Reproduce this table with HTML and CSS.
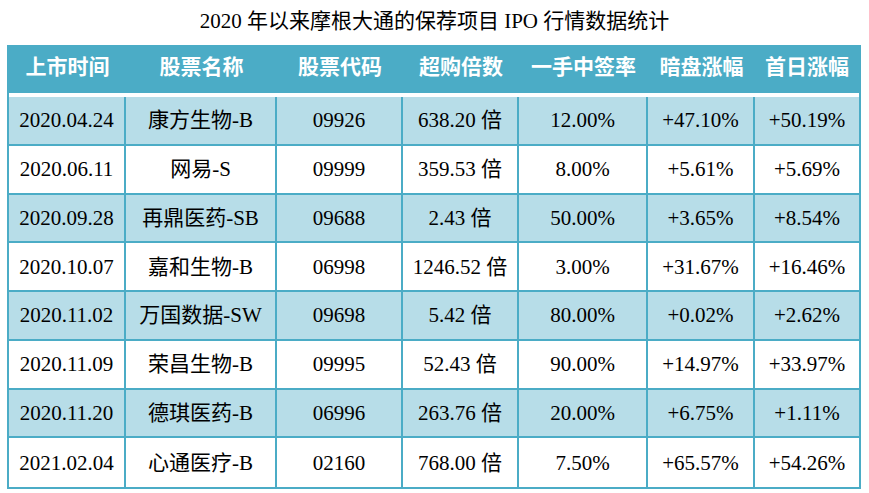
FILE: index.html
```html
<!DOCTYPE html>
<html lang="zh-CN">
<head>
<meta charset="utf-8">
<title>2020 年以来摩根大通的保荐项目 IPO 行情数据统计</title>
<link rel="stylesheet" href="styles.css">
</head>
<body>
<h1 class="title">2020 年以来摩根大通的保荐项目 IPO 行情数据统计</h1>
<div class="frame">
<table class="ipo">
  <colgroup>
    <col class="c1"><col class="c2"><col class="c3"><col class="c4"><col class="c5"><col class="c6"><col class="c7">
  </colgroup>
  <thead>
    <tr>
      <th>上市时间</th><th>股票名称</th><th>股票代码</th><th>超购倍数</th><th>一手中签率</th><th>暗盘涨幅</th><th>首日涨幅</th>
    </tr>
  </thead>
  <tbody>
    <tr class="band"><td>2020.04.24</td><td>康方生物-B</td><td>09926</td><td>638.20 倍</td><td>12.00%</td><td>+47.10%</td><td>+50.19%</td></tr>
    <tr><td>2020.06.11</td><td>网易-S</td><td>09999</td><td>359.53 倍</td><td>8.00%</td><td>+5.61%</td><td>+5.69%</td></tr>
    <tr class="band"><td>2020.09.28</td><td>再鼎医药-SB</td><td>09688</td><td>2.43 倍</td><td>50.00%</td><td>+3.65%</td><td>+8.54%</td></tr>
    <tr><td>2020.10.07</td><td>嘉和生物-B</td><td>06998</td><td>1246.52 倍</td><td>3.00%</td><td>+31.67%</td><td>+16.46%</td></tr>
    <tr class="band"><td>2020.11.02</td><td>万国数据-SW</td><td>09698</td><td>5.42 倍</td><td>80.00%</td><td>+0.02%</td><td>+2.62%</td></tr>
    <tr><td>2020.11.09</td><td>荣昌生物-B</td><td>09995</td><td>52.43 倍</td><td>90.00%</td><td>+14.97%</td><td>+33.97%</td></tr>
    <tr class="band"><td>2020.11.20</td><td>德琪医药-B</td><td>06996</td><td>263.76 倍</td><td>20.00%</td><td>+6.75%</td><td>+1.11%</td></tr>
    <tr class="last"><td>2021.02.04</td><td>心通医疗-B</td><td>02160</td><td>768.00 倍</td><td>7.50%</td><td>+65.57%</td><td>+54.26%</td></tr>
  </tbody>
</table>
</div>
</body>
</html>
```

FILE: styles.css
```css
html, body {
  margin: 0;
  padding: 0;
  background: #ffffff;
}

body {
  font-family: "Liberation Serif", "Noto Sans CJK SC", serif;
  font-size: 21px;
  color: #000000;
  padding: 9px 8px 0 7px;
}

.title {
  margin: 0 0 12px 0;
  font-size: 21px;
  font-weight: normal;
  line-height: 24px;
  height: 24px;
  text-align: center;
  padding-left: 1px;
}

.frame {
  border: 2px solid #4bacc6;
  border-top: 0;
}

.ipo {
  width: 100%;
  border-collapse: separate;
  border-spacing: 0;
  table-layout: fixed;
}

.c1 { width: 117px; }
.c2 { width: 151px; }
.c3 { width: 126px; }
.c4 { width: 116px; }
.c5 { width: 129px; }
.c6 { width: 107px; }
.c7 { width: 104px; }

.ipo th {
  box-sizing: border-box;
  height: 52px;
  padding: 0 0 4px 0;
  background: #4bacc6;
  background-clip: padding-box;
  border-bottom: 4px solid #ffffff;
  color: #ffffff;
  font-weight: bold;
  font-size: 21px;
  line-height: 24px;
  text-align: center;
  vertical-align: middle;
  white-space: nowrap;
}

.ipo td {
  box-sizing: border-box;
  height: 48.75px;
  padding: 0;
  border-right: 2px solid #4bacc6;
  border-bottom: 2px solid #4bacc6;
  line-height: 24px;
  text-align: center;
  vertical-align: middle;
  white-space: nowrap;
}

.ipo td:last-child {
  border-right: 0;
}

.ipo tr.last td {
  border-bottom: 0;
}

.ipo tr.band td {
  background: #b7dde8;
}
```
